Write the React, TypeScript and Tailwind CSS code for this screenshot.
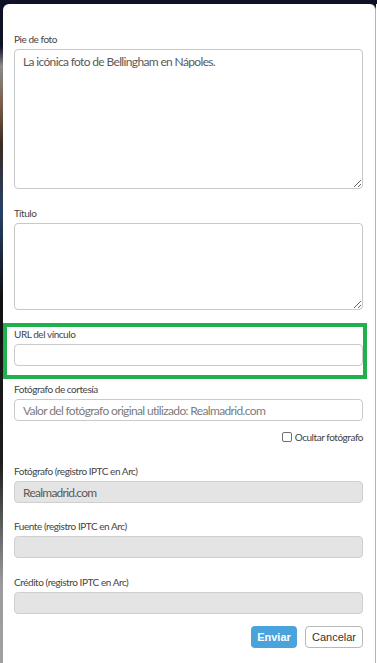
import React from "react";

const labelCls = "block h-[14px] mb-[3px] text-[10px] leading-[14px] tracking-[-0.45px] text-[#444]";
const inputCls =
  "block w-full h-[22px] px-[8px] rounded-[4px] border border-[#cacaca] bg-white text-[12px] leading-[20px] tracking-[-0.65px] text-[#5a5a5a] placeholder:text-[#7c7c7c] outline-none";
const readonlyCls =
  "block w-full h-[22px] px-[8px] rounded-[4px] border border-[#cfcfcf] bg-[#e4e4e4] text-[12px] leading-[20px] tracking-[-0.75px] text-[#5a5a5a] outline-none";
const areaCls =
  "block w-full px-[8px] py-[3px] rounded-[4px] border border-[#c8c8c8] bg-white text-[12px] leading-[18px] tracking-[-0.65px] text-[#5a5a5a] outline-none resize-y";

const IptcField = ({ label, value, className }: { label: string; value: string; className?: string }) => (
  <div className={className}>
    <label className={labelCls}>{label}</label>
    <input className={readonlyCls} value={value} readOnly />
  </div>
);

export default function App() {
  return (
    <div className="flex w-[377px] h-[663px] overflow-hidden bg-[#0f1226] font-['Lato','Open_Sans',sans-serif]">
      {/* sliver of the page behind the modal */}
      <div className="w-[3px] shrink-0 bg-[linear-gradient(to_bottom,#0f1226_0%,#0f1226_7%,#8b8b8b_10%,#7a5a44_16%,#3a2a22_22%,#27406a_32%,#111_45%,#1e1e1e_70%,#9b9b9b_88%,#a0a0a0_100%)]" />

      <div className="flex-1 mt-[4px] bg-white rounded-t-[6px] border-r border-[#b3b3b3] pt-[28px] pl-[11px] pr-[12px]">
        <div>
          <label className={labelCls}>Pie de foto</label>
          <textarea
            className={`${areaCls} h-[140px]`}
            defaultValue="La icónica foto de Bellingham en Nápoles."
          />
        </div>

        <div className="mt-[17px]">
          <label className={labelCls}>Título</label>
          <textarea className={`${areaCls} h-[87px]`} />
        </div>

        <div className="relative mt-[17px]">
          <label className={labelCls}>URL del vínculo</label>
          <input className={inputCls} />
          {/* highlight frame */}
          <div className="pointer-events-none absolute -left-[11px] -top-[4px] -right-[4px] -bottom-[13px] border-[4px] border-[#21b04b]" />
        </div>

        <div className="mt-[16px]">
          <label className={labelCls}>Fotógrafo de cortesía</label>
          <input className={inputCls} placeholder="Valor del fotógrafo original utilizado: Realmadrid.com" />
        </div>

        <div className="mt-[10px] flex justify-end">
          <label className="flex items-center gap-[3px] h-[12px] text-[10px] leading-[12px] tracking-[-0.45px] text-[#444]">
            <input
              type="checkbox"
              className="appearance-none w-[10px] h-[10px] border border-[#707070] rounded-[2px] bg-white"
            />
            Ocultar fotógrafo
          </label>
        </div>

        <IptcField className="mt-[21px]" label="Fotógrafo (registro IPTC en Arc)" value="Realmadrid.com" />
        <IptcField className="mt-[16px]" label="Fuente (registro IPTC en Arc)" value="" />
        <IptcField className="mt-[17px]" label="Crédito (registro IPTC en Arc)" value="" />

        <div className="mt-[12px] flex justify-end gap-[8px] font-['Liberation_Sans',Arial,sans-serif]">
          <button className="h-[22px] w-[46px] rounded-[4px] bg-[#4aa3dd] text-[11px] font-bold text-white">
            Enviar
          </button>
          <button className="h-[22px] w-[58px] rounded-[4px] border border-[#b8b8b8] bg-white text-[11px] text-[#333]">
            Cancelar
          </button>
        </div>
      </div>
      <div className="w-[1px] mt-[4px] bg-white" />
    </div>
  );
}
